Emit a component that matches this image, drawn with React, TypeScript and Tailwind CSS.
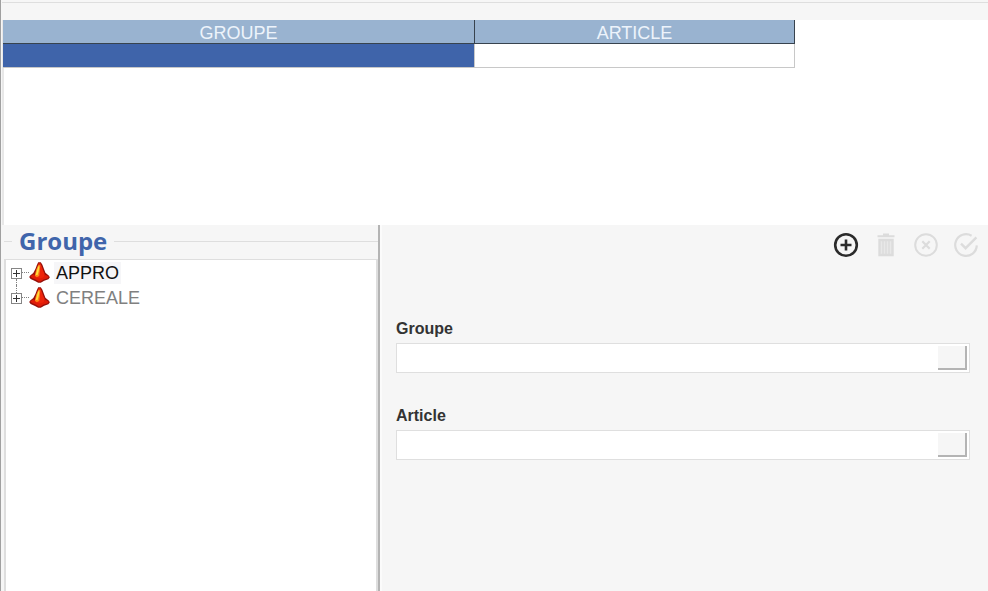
import { useState } from 'react';

const groups = ['APPRO', 'CEREALE'];

const ConeIcon = () => (
  <svg viewBox="0 0 21 21" className="h-[21px] w-[21px] shrink-0" aria-hidden="true">
    <path
      d="M9.2.3h2.6l1.6 2.5 1.3 3.4 1.7 4.6 3.6 3 .8 1.8-1.4 1.7-4.2 1.4-3.4 2H9.2L6 18.9 1.6 17 .2 15l1-1.6 3.1-2.3L6.4 7l1.4-3.7z"
      fill="#96100a"
    />
    <path
      d="M9.6 1.3h1.7l1.4 3.2 1.5 4.2 1.5 3.6.2 2.6-3.3 2.6-4-.4L5 14.9l1.6-4.6 1.6-3.9z"
      fill="#ee240a"
    />
    <path d="M4.2 12.3l-2.9 2.2 1.7 1.5 4 1.7 2.6 1.9h1.7l3.3-2.1 4.1-1.3 1.1-1.4-3.3-2-2.2 2.6-3.6 1-3.6-1.2z" fill="#e01c08" />
    <path d="M9.4 2.8l1.9.4-.4 4.8-.7 6-2.4 1.2-2-1.5L7.4 7.2z" fill="#ff8418" />
    <path d="M9.3 4.2l1.1.3-.9 5.6-1 3.1-1.8-.5 1.3-4.5z" fill="#ffe03e" />
  </svg>
);

const PlusCircleIcon = () => (
  <svg viewBox="0 0 26 26" className="h-[26px] w-[26px]" fill="none" stroke="currentColor" aria-hidden="true">
    <circle cx="13" cy="13" r="10.8" strokeWidth="2.6" />
    <path d="M13 7.5v11M7.5 13h11" strokeWidth="2.6" />
  </svg>
);

const TrashIcon = () => (
  <svg viewBox="0 0 26 26" className="h-[26px] w-[26px]" fill="none" stroke="currentColor" aria-hidden="true">
    <path d="M4.5 4.2h17M10 2.6h6" strokeWidth="2" />
    <path d="M6.5 8h13V23h-13z" fill="#e8e8e8" strokeWidth="2.4" />
    <path d="M10 9v13M13 9v13M16 9v13" strokeWidth="1.4" />
  </svg>
);

const CancelCircleIcon = () => (
  <svg viewBox="0 0 26 26" className="h-[26px] w-[26px]" fill="none" stroke="currentColor" aria-hidden="true">
    <circle cx="13" cy="13" r="10.8" strokeWidth="2" />
    <path d="M9.3 9.3l7.4 7.4M16.7 9.3l-7.4 7.4" strokeWidth="2.2" />
  </svg>
);

const CheckCircleIcon = () => (
  <svg viewBox="0 0 26 26" className="h-[26px] w-[26px]" fill="none" stroke="currentColor" aria-hidden="true">
    <path d="M18.6 3.8A10.8 10.8 0 1 0 23.8 13.4" strokeWidth="2.2" />
    <path d="M8 11.6l4.6 4.6L23.4 5.4" strokeWidth="2.4" />
  </svg>
);

interface GroupNodeProps {
  label: string;
  selected: boolean;
  last: boolean;
  onSelect: () => void;
}

const GroupNode = ({ label, selected, last, onSelect }: GroupNodeProps) => (
  <li className="flex h-[25px] items-center">
    <div className="flex h-full w-[11px] flex-col items-center">
      <span className={`h-2 ${last ? 'border-l border-dotted border-[#808080]' : ''}`} />
      <button type="button" aria-label={`Développer ${label}`} className="block h-[11px] w-[11px]">
        <svg viewBox="0 0 11 11" className="block h-[11px] w-[11px]" aria-hidden="true">
          <rect x=".5" y=".5" width="10" height="10" fill="#fff" stroke="#858585" />
          <path d="M2 5.5h7M5.5 2v7" stroke="#333" />
        </svg>
      </button>
      <span className={`flex-1 ${last ? '' : 'border-l border-dotted border-[#808080]'}`} />
    </div>
    <span className="w-[7px] border-t border-dotted border-[#808080]" />
    <ConeIcon />
    <button
      type="button"
      onClick={onSelect}
      className={`ml-1 h-[22px] px-0.5 text-lg leading-[22px] ${
        selected ? 'bg-[#f6f6f8] text-[#111]' : 'text-[#808080]'
      }`}
    >
      {label}
    </button>
  </li>
);

interface LookupFieldProps {
  id: string;
  label: string;
}

const LookupField = ({ id, label }: LookupFieldProps) => (
  <div>
    <label htmlFor={id} className="block text-base leading-[22px] font-bold text-[#333]">
      {label}
    </label>
    <div className="mt-[3px] flex h-[30px] items-center border border-[#dfdfdf] bg-white pr-0.5">
      <input id={id} type="text" className="h-full min-w-0 flex-1 px-2 text-base outline-none" />
      <button
        type="button"
        aria-label={`Rechercher ${label}`}
        className="h-6 w-[29px] border-r-2 border-b-2 border-[#b4b4b4] bg-[#f6f6f6]"
      />
    </div>
  </div>
);

export default function App() {
  const [selected, setSelected] = useState('APPRO');

  return (
    <div className="flex min-h-screen flex-col border-l border-[#a0a0a0] bg-white font-['Liberation_Sans',Arial,sans-serif]">
      <div className="flex flex-1 flex-col border-l border-[#f6f6f6]">
        <header className="h-5 bg-[#f6f6f6] pt-px">
          <div className="h-0.5 border-b border-[#dedede]" />
        </header>

        <section className="h-[205px] border-l-2 border-[#e8e8e8]">
          <table className="-ml-px table-fixed border-separate border-spacing-0 text-lg">
            <colgroup>
              <col className="w-[472px]" />
              <col className="w-[320px]" />
            </colgroup>
            <thead>
              <tr className="bg-[#99b3d0] text-[#edf3fb]">
                <th className="h-6 border-r border-b border-[#38434e] p-0 pt-1 leading-[19px] font-normal">GROUPE</th>
                <th className="h-6 border-r border-b border-[#38434e] p-0 pt-1 leading-[19px] font-normal">ARTICLE</th>
              </tr>
            </thead>
            <tbody>
              <tr>
                <td className="h-6 border-r border-b border-[#c8c8c8] bg-[#3f64aa] p-0" />
                <td className="h-6 border-r border-b border-[#c8c8c8] p-0" />
              </tr>
            </tbody>
          </table>
        </section>

        <main className="flex flex-1 bg-[#f6f6f6]">
          <aside className="flex w-[378px] shrink-0 flex-col border-r-2 border-[#b4b4b4] pl-0.5">
            <div className="flex h-[34px] items-center pb-0.5">
              <span className="w-2 border-t border-[#dedede]" />
              <h2 className="px-[7px] font-['Open_Sans','Noto_Sans',sans-serif] text-2xl leading-8 font-bold text-[#4065ab]">
                Groupe
              </h2>
              <span className="flex-1 border-t border-[#dedede]" />
            </div>
            <ul className="flex-1 border-t border-r-2 border-l-2 border-[#dedede] bg-white pl-[5px]">
              {groups.map((group, i) => (
                <GroupNode
                  key={group}
                  label={group}
                  selected={group === selected}
                  last={i === groups.length - 1}
                  onSelect={() => setSelected(group)}
                />
              ))}
            </ul>
          </aside>

          <section className="min-w-0 flex-1 border-l-2 border-[#fbfbfb] pr-[18px] pl-[14px]">
            <div className="-mr-[9px] flex justify-end gap-[14px] pt-[7px] text-[#dcdcdc]">
              <button type="button" aria-label="Ajouter" className="text-[#2b2b2b]">
                <PlusCircleIcon />
              </button>
              <button type="button" aria-label="Supprimer" disabled>
                <TrashIcon />
              </button>
              <button type="button" aria-label="Annuler" disabled>
                <CancelCircleIcon />
              </button>
              <button type="button" aria-label="Valider" disabled>
                <CheckCircleIcon />
              </button>
            </div>
            <form className="mt-[60px] flex flex-col gap-8">
              <LookupField id="groupe" label="Groupe" />
              <LookupField id="article" label="Article" />
            </form>
          </section>
        </main>
      </div>
    </div>
  );
}
